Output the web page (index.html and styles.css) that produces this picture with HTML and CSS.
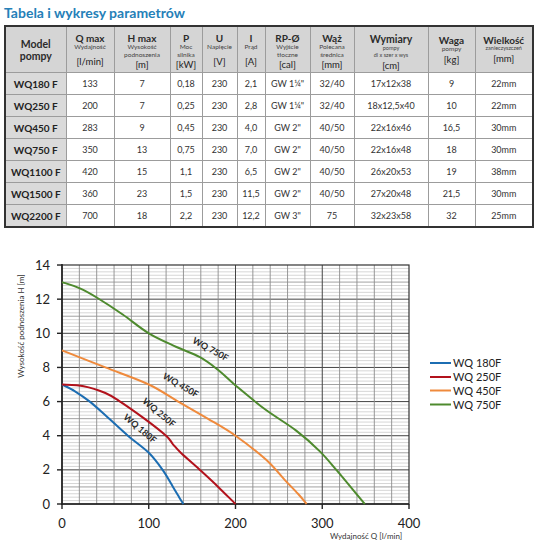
FILE: index.html
```html
<!DOCTYPE html>
<html lang="pl">
<head>
    <meta charset="UTF-8">
    <meta name="viewport" content="width=device-width, initial-scale=1.0">
    <title>Tabela i wykresy parametrów</title>
    <link rel="stylesheet" href="styles.css">
</head>
<body>
    <h1 class="title">Tabela i wykresy parametrów</h1>

    <table class="params">
        <colgroup>
            <col class="w-model"><col class="w-q"><col class="w-h"><col class="w-p"><col class="w-u"><col class="w-i">
            <col class="w-rp"><col class="w-waz"><col class="w-dim"><col class="w-kg"><col class="w-size">
        </colgroup>
        <thead>
            <tr>
                <th><div class="hd hd-c"><span class="name big">Model<br>pompy</span></div></th>
                <th><div class="hd"><div><span class="name">Q max</span><span class="sub">Wydajność</span></div><span class="unit">[l/min]</span></div></th>
                <th><div class="hd"><div><span class="name">H max</span><span class="sub">Wysokość<br>podnoszenia</span></div><span class="unit">[m]</span></div></th>
                <th><div class="hd"><div><span class="name">P</span><span class="sub">Moc<br>silnika</span></div><span class="unit">[kW]</span></div></th>
                <th><div class="hd"><div><span class="name">U</span><span class="sub">Napięcie</span></div><span class="unit">[V]</span></div></th>
                <th><div class="hd"><div><span class="name">I</span><span class="sub">Prąd</span></div><span class="unit">[A]</span></div></th>
                <th><div class="hd"><div><span class="name">RP-Ø</span><span class="sub">Wyjście<br>tłoczne</span></div><span class="unit">[cal]</span></div></th>
                <th><div class="hd"><div><span class="name">Wąż</span><span class="sub">Polecana<br>średnica</span></div><span class="unit">[mm]</span></div></th>
                <th><div class="hd"><div><span class="name big">Wymiary</span><span class="sub tiny">pompy<br>dl x szer x wys</span></div><span class="unit">[cm]</span></div></th>
                <th><div class="hd hd-c"><span class="name">Waga</span><span class="sub">pompy</span><span class="unit">[kg]</span></div></th>
                <th><div class="hd hd-c"><span class="name">Wielkość</span><span class="sub tiny">zanieczyszczeń</span><span class="unit">[mm]</span></div></th>
            </tr>
        </thead>
        <tbody>
            <tr><td class="model">WQ180 F</td><td>133</td><td>7</td><td>0,18</td><td>230</td><td>2,1</td><td>GW 1¼"</td><td>32/40</td><td>17x12x38</td><td>9</td><td>22mm</td></tr>
            <tr><td class="model">WQ250 F</td><td>200</td><td>7</td><td>0,25</td><td>230</td><td>2,8</td><td>GW 1¼"</td><td>32/40</td><td>18x12,5x40</td><td>10</td><td>22mm</td></tr>
            <tr><td class="model">WQ450 F</td><td>283</td><td>9</td><td>0,45</td><td>230</td><td>4,0</td><td>GW 2"</td><td>40/50</td><td>22x16x46</td><td>16,5</td><td>30mm</td></tr>
            <tr><td class="model">WQ750 F</td><td>350</td><td>13</td><td>0,75</td><td>230</td><td>7,0</td><td>GW 2"</td><td>40/50</td><td>22x16x48</td><td>18</td><td>30mm</td></tr>
            <tr><td class="model">WQ1100 F</td><td>420</td><td>15</td><td>1,1</td><td>230</td><td>6,5</td><td>GW 2"</td><td>40/50</td><td>26x20x53</td><td>19</td><td>38mm</td></tr>
            <tr><td class="model">WQ1500 F</td><td>360</td><td>23</td><td>1,5</td><td>230</td><td>11,5</td><td>GW 2"</td><td>40/50</td><td>27x20x48</td><td>21,5</td><td>30mm</td></tr>
            <tr><td class="model">WQ2200 F</td><td>700</td><td>18</td><td>2,2</td><td>230</td><td>12,2</td><td>GW 3"</td><td>75</td><td>32x23x58</td><td>32</td><td>25mm</td></tr>
        </tbody>
    </table>

    <svg class="chart" width="535" height="300" viewBox="0 240 535 300">
        <g id="grid"></g>
        <!-- axes and frame -->
        <rect class="frame" x="62" y="264" width="347" height="239"></rect>
        <line class="axis" x1="62" y1="263" x2="62" y2="504"></line>
        <line class="axis" x1="61" y1="503" x2="409" y2="503"></line>
        <g id="ticks"></g>
        <g class="ylabels">
            <text x="50" y="268.5">14</text>
            <text x="50" y="302.6">12</text>
            <text x="50" y="336.7">10</text>
            <text x="50" y="370.9">8</text>
            <text x="50" y="405">6</text>
            <text x="50" y="439.2">4</text>
            <text x="50" y="473.3">2</text>
            <text x="50" y="507.5">0</text>
        </g>
        <g class="xlabels">
            <text x="62" y="527">0</text>
            <text x="148.7" y="527">100</text>
            <text x="235.5" y="527">200</text>
            <text x="322.2" y="527">300</text>
            <text x="409" y="527">400</text>
        </g>
        <text class="axis-title" x="366" y="538" text-anchor="middle">Wydajność Q [l/min]</text>
        <text class="axis-title" transform="translate(24 325) rotate(-90)" text-anchor="middle">Wysokość podnoszenia H [m]</text>

        <path id="c180" class="curve c-blue"></path>
        <path id="c250" class="curve c-red"></path>
        <path id="c450" class="curve c-orange"></path>
        <path id="c750" class="curve c-green"></path>

        <g class="curve-label">
            <text transform="translate(209 351) rotate(29)">WQ 750F</text>
            <text transform="translate(179 387) rotate(30)">WQ 450F</text>
            <text transform="translate(157 414) rotate(40)">WQ 250F</text>
            <text transform="translate(138 430) rotate(40)">WQ 180F</text>
        </g>

        <g class="legend">
            <line class="c-blue" x1="430" y1="362" x2="451" y2="362"></line>
            <text x="453" y="366">WQ 180F</text>
            <line class="c-red" x1="430" y1="376" x2="451" y2="376"></line>
            <text x="453" y="380">WQ 250F</text>
            <line class="c-orange" x1="430" y1="389.5" x2="451" y2="389.5"></line>
            <text x="453" y="393.5">WQ 450F</text>
            <line class="c-green" x1="430" y1="403.5" x2="451" y2="403.5"></line>
            <text x="453" y="407.5">WQ 750F</text>
        </g>
    </svg>

    <script>
        // Plot scale: Q 0..400 l/min, H 0..14 m
        const X0 = 62, Y0 = 503, SX = 0.8675, SY = 17.07;
        const NS = 'http://www.w3.org/2000/svg';
        const px = q => X0 + q * SX;
        const py = h => Y0 - h * SY;

        function addLine(parent, x1, y1, x2, y2, cls) {
            const l = document.createElementNS(NS, 'line');
            l.setAttribute('x1', x1);
            l.setAttribute('y1', y1);
            l.setAttribute('x2', x2);
            l.setAttribute('y2', y2);
            l.setAttribute('class', cls);
            parent.appendChild(l);
        }

        // Grid lines
        const grid = document.getElementById('grid');
        for (let k = 1; k < 70; k++) {
            const cls = k % 10 === 0 ? 'g-major' : (k % 5 === 0 ? 'g-mid' : 'g-minor');
            addLine(grid, px(0), py(k * 0.2), px(400), py(k * 0.2), cls);
        }
        for (let j = 1; j < 20; j++) {
            const cls = j % 5 === 0 ? 'g-major' : 'g-vert';
            addLine(grid, px(j * 20), py(0), px(j * 20), py(14), cls);
        }

        // Tick marks
        const ticks = document.getElementById('ticks');
        for (let h = 0; h <= 14; h += 2) addLine(ticks, 57, py(h), 62, py(h), 'tick');
        for (let q = 0; q <= 400; q += 100) addLine(ticks, px(q), 503, px(q), 508, 'tick');

        // Smooth curve through points (Catmull-Rom)
        function smooth(points) {
            const p = points.map(([q, h]) => [px(q), py(h)]);
            let d = `M${p[0][0].toFixed(1)},${p[0][1].toFixed(1)}`;
            for (let i = 0; i < p.length - 1; i++) {
                const p0 = p[i - 1] || p[i], p1 = p[i], p2 = p[i + 1], p3 = p[i + 2] || p2;
                const c1 = [p1[0] + (p2[0] - p0[0]) / 6, p1[1] + (p2[1] - p0[1]) / 6];
                const c2 = [p2[0] - (p3[0] - p1[0]) / 6, p2[1] - (p3[1] - p1[1]) / 6];
                d += ` C${c1[0].toFixed(1)},${c1[1].toFixed(1)} ${c2[0].toFixed(1)},${c2[1].toFixed(1)} ${p2[0].toFixed(1)},${p2[1].toFixed(1)}`;
            }
            return d;
        }

        const curves = {
            c180: [[0, 7], [15, 6.6], [32, 6], [50, 5.2], [76, 4], [100, 3], [116, 2], [128, 1], [135, 0.4], [140, 0]],
            c250: [[0, 7], [25, 6.9], [50, 6.5], [67, 6], [95, 5], [120, 4], [128, 3.5], [137, 3], [159, 2], [180, 1], [200, 0]],
            c450: [[0, 9], [50, 8], [100, 7], [134, 6], [168, 5], [200, 4], [235, 2.6], [257, 1.4], [272, 0.6], [282, 0]],
            c750: [[0, 13], [20, 12.65], [40, 12.1], [70, 11.1], [100, 10], [132, 9.2], [159, 8.6], [180, 7.85], [200, 6.95], [234, 5.55], [270, 4.3], [297, 3.1], [317, 1.95], [349, 0]]
        };
        Object.keys(curves).forEach(id => {
            document.getElementById(id).setAttribute('d', smooth(curves[id]));
        });
    </script>
</body>
</html>
```

FILE: styles.css
```css
body {
    margin: 0;
    font-family: Lato, "Noto Sans", sans-serif;
    background-color: white;
    color: #222;
}

.title {
    margin: 0;
    padding: 4px 0 0 4px;
    font-size: 14px;
    line-height: 18px;
    font-weight: bold;
    color: #2580b8;
}

/* Parameter table */
.params {
    margin: 3px 0 0 4px;
    width: 528px;
    table-layout: fixed;
    border-collapse: collapse;
    border: 2px solid #333;
}

.w-model { width: 61px; }
.w-q { width: 48px; }
.w-h { width: 56px; }
.w-p { width: 32px; }
.w-u { width: 35px; }
.w-i { width: 28px; }
.w-rp { width: 45px; }
.w-waz { width: 44px; }
.w-dim { width: 74px; }
.w-kg { width: 47px; }
.w-size { width: 58px; }

.params th,
.params td {
    border: 1px solid #9c9c9c;
    padding: 0;
    text-align: center;
    white-space: nowrap;
}

.params th {
    height: 45px;
    background-color: #d5d5d5;
    color: #2b2b2b;
    vertical-align: middle;
}

.hd {
    display: flex;
    flex-direction: column;
    justify-content: space-between;
    align-items: center;
    height: 34px;
}

.hd-c {
    justify-content: center;
}

.hd .name {
    display: block;
    font-size: 10px;
    line-height: 10px;
    font-weight: bold;
}

.hd .name.big {
    font-size: 10.5px;
    line-height: 12px;
}

.hd .sub {
    display: block;
    font-size: 6.5px;
    line-height: 8px;
    font-weight: normal;
    color: #444;
}

.hd .sub.tiny {
    font-size: 5.5px;
    line-height: 7.5px;
}

.hd .unit {
    display: block;
    font-size: 9.5px;
    line-height: 11px;
    font-weight: normal;
    color: #222;
}

.hd-c .unit {
    margin-top: 1px;
}

.params td {
    height: 21px;
    font-size: 9px;
    color: #333;
    background-color: white;
}

.params td.model {
    background-color: #dadada;
    font-size: 10px;
    font-weight: bold;
    color: #222;
}

/* Chart */
.chart {
    display: block;
    margin-top: 13px;
    font-family: Lato, "Noto Sans", sans-serif;
}

.frame {
    fill: none;
    stroke: #333;
    stroke-width: 1.2;
}

.axis {
    stroke: #222;
    stroke-width: 1.6;
}

.tick {
    stroke: #222;
    stroke-width: 1.4;
}

.g-minor {
    stroke: #c4c4c4;
    stroke-width: 0.7;
}

.g-mid {
    stroke: #8a8a8a;
    stroke-width: 0.8;
}

.g-major {
    stroke: #444;
    stroke-width: 1;
}

.g-vert {
    stroke: #8c8c8c;
    stroke-width: 0.9;
}

.ylabels text {
    font-size: 13px;
    text-anchor: end;
    fill: #222;
}

.xlabels text {
    font-size: 13px;
    text-anchor: middle;
    fill: #222;
}

.axis-title {
    font-size: 8px;
    fill: #333;
}

.curve {
    fill: none;
    stroke-width: 2;
    stroke-linejoin: round;
}

.c-blue { stroke: #1c6db2; }
.c-red { stroke: #b2121c; }
.c-orange { stroke: #ef8a3c; }
.c-green { stroke: #4e8a2e; }

.curve-label text {
    font-size: 9px;
    font-weight: bold;
    fill: #2a2a2a;
    text-anchor: middle;
}

.legend line {
    stroke-width: 2;
}

.legend text {
    font-size: 11px;
    fill: #222;
}
```
